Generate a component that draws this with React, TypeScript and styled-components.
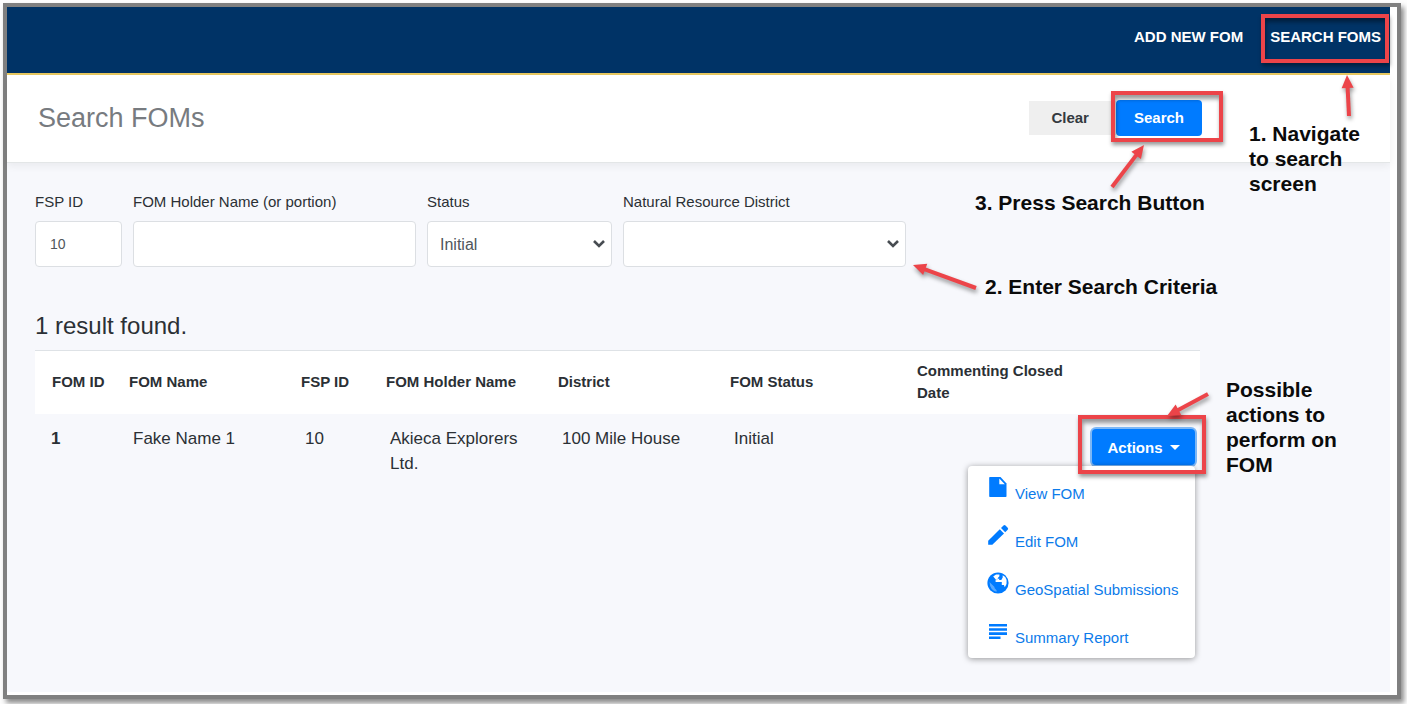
import React from "react";
import styled, { createGlobalStyle } from "styled-components";

const GlobalStyle = createGlobalStyle`
  *, *::before, *::after { box-sizing: border-box; }
  body {
    margin: 0;
    padding: 3px 6px 5px 3px;
    background: #fdfdfd;
    color: #2b3035;
    font-family: "Liberation Sans", Arial, sans-serif;
    font-size: 15px;
    line-height: 22px;
  }
`;

const RED = "#ec4449";
const BLUE = "#007bff";

const Frame = styled.div`
  position: relative;
  display: flex;
  flex-direction: column;
  min-height: calc(100vh - 8px);
  padding: 0 7px 3px 0;
  border: 4px solid #808080;
  background: #fff;
  box-shadow: 3px 4px 5px #8c8c8c;
`;

const Header = styled.header`
  display: flex;
  justify-content: flex-end;
  height: 68px;
  padding: 19px 9px 0 0;
  background: #003366;
  border-bottom: 2px solid #e8c961;
`;

const Nav = styled.nav`
  display: flex;
  align-items: flex-start;
  gap: 27px;
`;

const NavLink = styled.a`
  display: block;
  color: #fff;
  font-weight: bold;
  text-decoration: none;
  white-space: nowrap;
`;

const Marked = styled.div`
  position: relative;
`;

const Highlight = styled.span<{ $inset: string }>`
  position: absolute;
  z-index: 3;
  inset: ${(p) => p.$inset};
  border: 4px solid ${RED};
  box-shadow: 1px 3px 4px rgba(0, 0, 0, 0.4), inset 1px 4px 4px rgba(0, 0, 0, 0.4);
  pointer-events: none;
`;

const TitleBar = styled.section`
  position: relative;
  display: flex;
  align-items: center;
  justify-content: space-between;
  height: 88px;
  padding: 0 188px 2px 31px;
  background: #fff;
  border-bottom: 1px solid #e3e6e7;
  box-shadow: 0 3px 8px rgba(0, 0, 0, 0.06);
`;

const Title = styled.h1`
  margin: 0;
  color: #777b80;
  font-size: 27px;
  font-weight: normal;
  line-height: 36px;
`;

const ButtonRow = styled.div`
  display: flex;
  align-items: center;
`;

const Button = styled.button<{ $kind: "plain" | "primary"; $focused?: boolean }>`
  display: flex;
  align-items: center;
  justify-content: center;
  gap: 7px;
  height: ${(p) => (p.$kind === "plain" ? 34 : 36)}px;
  padding: 0 ${(p) => (p.$focused ? 14 : 18)}px;
  border: 0;
  border-radius: ${(p) => (p.$kind === "plain" ? 0 : 4)}px;
  background: ${(p) => (p.$kind === "plain" ? "#efefef" : BLUE)};
  color: ${(p) => (p.$kind === "plain" ? "#343a40" : "#fff")};
  box-shadow: ${(p) => (p.$focused ? "0 0 0 2px #7db7f5" : "none")};
  font: bold 15px "Liberation Sans", Arial, sans-serif;
  cursor: pointer;
`;

const ClearButton = styled(Button)`
  padding: 0 27px 0 22px;
`;

const Caret = styled.span`
  border: 5px solid transparent;
  border-top-color: #fff;
  border-bottom: 0;
`;

const Main = styled.main`
  flex: 1;
  padding: 28px 190px 40px 28px;
  background: #f7f8fc;
`;

const SearchForm = styled.form`
  display: grid;
  grid-template-columns: repeat(12, minmax(0, 1fr));
  column-gap: 11px;
`;

const Field = styled.div<{ $span: number }>`
  grid-column: span ${(p) => p.$span};
`;

const Label = styled.label`
  display: block;
  margin-bottom: 8px;
  white-space: nowrap;
`;

const controlStyle = `
  display: block;
  width: 100%;
  height: 46px;
  border: 1px solid #dcdfe3;
  border-radius: 4px;
  background: #fff;
  color: #50565c;
  font-family: "Liberation Sans", Arial, sans-serif;
`;

const TextInput = styled.input`
  ${controlStyle}
  padding: 0 14px;
  font-size: 14px;
`;

const SelectWrap = styled.div`
  position: relative;
`;

const Select = styled.select`
  ${controlStyle}
  appearance: none;
  padding: 0 30px 0 12px;
  font-size: 16px;
`;

const Chevron = styled.svg`
  position: absolute;
  top: 18px;
  right: 6px;
  pointer-events: none;
`;

const ResultCount = styled.h2`
  margin: 44px 0 9px;
  font-size: 24px;
  font-weight: normal;
  line-height: 30px;
`;

const Table = styled.table`
  width: 100%;
  table-layout: fixed;
  border-collapse: separate;
  border-spacing: 0;
`;

const HeadCell = styled.th`
  height: 64px;
  padding: 8px 12px 10px;
  border-top: 1px solid #dee2e6;
  background: #fff;
  text-align: left;
  vertical-align: middle;
  &:first-child { padding-left: 17px; padding-right: 0; }
`;

const cellStyle = `
  padding: 12px 12px 12px 16px;
  font-size: 17px;
  line-height: 25px;
  text-align: left;
  vertical-align: top;
`;

const Cell = styled.td`
  ${cellStyle}
`;

const RowHead = styled.th`
  ${cellStyle}
`;

const ActionCell = styled.td`
  padding: 15px 5px 0 15px;
  vertical-align: top;
`;

const ActionWrap = styled.div`
  position: relative;
  display: grid;
`;

const Menu = styled.ul`
  position: absolute;
  z-index: 2;
  top: 37px;
  right: 0;
  width: 227px;
  margin: 0;
  padding: 0;
  list-style: none;
  border-radius: 4px;
  background: #fff;
  box-shadow: 0 1px 6px rgba(0, 0, 0, 0.4);
`;

const MenuLink = styled.a`
  display: flex;
  gap: 6px;
  height: 48px;
  padding: 10px 0 0 19px;
  color: #0c7bea;
  text-decoration: none;
  white-space: nowrap;
`;

const MenuIcon = styled.svg`
  flex: none;
  width: 22px;
  height: 22px;
  fill: ${BLUE};
`;

const MenuText = styled.span`
  padding-top: 7px;
`;

const Note = styled.p<{ $top: number; $right: number; $width: number }>`
  position: absolute;
  z-index: 4;
  top: ${(p) => p.$top}px;
  right: ${(p) => p.$right}px;
  width: ${(p) => p.$width}px;
  margin: 0;
  color: #0b0b0b;
  font-size: 21px;
  font-weight: bold;
  line-height: 25px;
  white-space: pre-line;
`;

const ArrowLayer = styled.svg`
  position: absolute;
  z-index: 4;
  top: 0;
  right: 0;
  pointer-events: none;
  filter: drop-shadow(1px 3px 2px rgba(0, 0, 0, 0.4));
`;

type Point = [number, number];

function Arrow({ from, to }: { from: Point; to: Point }) {
  const dx = to[0] - from[0];
  const dy = to[1] - from[1];
  const length = Math.hypot(dx, dy);
  const angle = (Math.atan2(dy, dx) * 180) / Math.PI;
  return (
    <g transform={`translate(${from[0]} ${from[1]}) rotate(${angle})`}>
      <line x1="0" y1="0" x2={length - 9} y2="0" stroke={RED} strokeWidth="4" />
      <polygon points={`${length},0 ${length - 13},-6 ${length - 13},6`} fill={RED} />
    </g>
  );
}

function ChevronMark() {
  return (
    <Chevron width="14" height="10" viewBox="0 0 14 10" aria-hidden="true">
      <path d="M2 2l5 5 5-5" fill="none" stroke="#474c51" strokeWidth="2.6" />
    </Chevron>
  );
}

const columns = [
  { name: "FOM ID", width: 82 },
  { name: "FOM Name", width: 172 },
  { name: "FSP ID", width: 85 },
  { name: "FOM Holder Name", width: 172 },
  { name: "District", width: 172 },
  { name: "FOM Status", width: 187 },
  { name: "Commenting Closed Date", width: 172 },
  { name: "", width: 123 },
];

const menuItems = [
  {
    text: "View FOM",
    icon: (
      <>
        <path d="M3 1h10.500l6 6.500V20.200q0 .8-.8.800H3q-.8 0-.8-.800V1.800Q2.200 1 3 1z" />
        <path d="M12.300 2.600v5.600h5.500z" fill="#fff" />
      </>
    ),
  },
  {
    text: "Edit FOM",
    icon: (
      <>
        <path d="M1.200 20.800v-4L12.800 5.200l4.200 4.200L5.300 20.800z" />
        <path d="M14 4l2.500-2.500q1-.9 2 0l2.200 2.200q.9 1 0 2L18.200 8.200z" />
      </>
    ),
  },
  {
    text: "GeoSpatial Submissions",
    icon: (
      <>
        <circle cx="11" cy="11" r="10.600" />
        <path
          d="M6.200 4.600L9 2.600h3.400v1.600L10.800 6v1.700H8.600v2.200h6.200v3h2.100l.9 2.300q2.600-3.400 1.800-7.200-.8-3.400-3.900-4.700v2.100L14.300 8h-2.100V6.200L9.500 8.300z"
          fill="#fff"
        />
        <path d="M2.500 10l5 4.900v1.200l2.100 2.200v1.500Q3 18.300 2.500 10z" fill="#fff" opacity=".35" />
      </>
    ),
  },
  {
    text: "Summary Report",
    icon: <path d="M2 4h18v2.600H2zM2 8.200h18v2.600H2zM2 12.300h18v2.600H2zM2 16.400h11.500V19H2z" />,
  },
];

export default function App() {
  return (
    <>
      <GlobalStyle />
      <Frame>
        <Header>
          <Nav>
            <NavLink href="#add">ADD NEW FOM</NavLink>
            <Marked>
              <NavLink href="#search">SEARCH FOMS</NavLink>
              <Highlight $inset="-12px -8px -15px -9px" />
            </Marked>
          </Nav>
        </Header>

        <TitleBar>
          <Title>Search FOMs</Title>
          <ButtonRow>
            <ClearButton type="reset" form="fom-search" $kind="plain">Clear</ClearButton>
            <Marked>
              <Button type="submit" form="fom-search" $kind="primary">Search</Button>
              <Highlight $inset="-9px -21px -6px -5px" />
            </Marked>
          </ButtonRow>
        </TitleBar>

        <Main>
          <SearchForm id="fom-search" onSubmit={(e) => e.preventDefault()}>
            <Field $span={1}>
              <Label htmlFor="fsp">FSP ID</Label>
              <TextInput id="fsp" defaultValue="10" />
            </Field>
            <Field $span={3}>
              <Label htmlFor="holder">FOM Holder Name (or portion)</Label>
              <TextInput id="holder" />
            </Field>
            <Field $span={2}>
              <Label htmlFor="status">Status</Label>
              <SelectWrap>
                <Select id="status" defaultValue="Initial">
                  <option>Initial</option>
                </Select>
                <ChevronMark />
              </SelectWrap>
            </Field>
            <Field $span={3}>
              <Label htmlFor="district">Natural Resource District</Label>
              <SelectWrap>
                <Select id="district" defaultValue="">
                  <option value="" />
                </Select>
                <ChevronMark />
              </SelectWrap>
            </Field>
          </SearchForm>

          <ResultCount>1 result found.</ResultCount>

          <Table>
            <colgroup>
              {columns.map((c) => (
                <col key={c.name} width={c.width} />
              ))}
            </colgroup>
            <thead>
              <tr>
                {columns.map((c) => (
                  <HeadCell key={c.name} scope="col">{c.name}</HeadCell>
                ))}
              </tr>
            </thead>
            <tbody>
              <tr>
                <RowHead scope="row">1</RowHead>
                <Cell>Fake Name 1</Cell>
                <Cell>10</Cell>
                <Cell>Akieca Explorers Ltd.</Cell>
                <Cell>100 Mile House</Cell>
                <Cell>Initial</Cell>
                <Cell />
                <ActionCell>
                  <ActionWrap>
                    <Button type="button" $kind="primary" $focused aria-haspopup="true" aria-expanded="true">
                      Actions <Caret />
                    </Button>
                    <Menu>
                      {menuItems.map(({ text, icon }) => (
                        <li key={text}>
                          <MenuLink href="#fom">
                            <MenuIcon viewBox="0 0 22 22" aria-hidden="true">{icon}</MenuIcon>
                            <MenuText>{text}</MenuText>
                          </MenuLink>
                        </li>
                      ))}
                    </Menu>
                    <Highlight $inset="-14px -11px -9px -14px" />
                  </ActionWrap>
                </ActionCell>
              </tr>
            </tbody>
          </Table>
        </Main>

        <ArrowLayer width="500" height="500" viewBox="897 7 500 500" aria-hidden="true">
          <Arrow from={[1349, 116]} to={[1347, 75]} />
          <Arrow from={[1112, 187]} to={[1144, 145]} />
          <Arrow from={[976, 288]} to={[913, 265]} />
          <Arrow from={[1208, 394]} to={[1167, 416]} />
        </ArrowLayer>
        <Note $top={114} $right={18} $width={130}>{"1. Navigate\nto search\nscreen"}</Note>
        <Note $top={183} $right={172} $width={250}>3. Press Search Button</Note>
        <Note $top={267} $right={162} $width={250}>2. Enter Search Criteria</Note>
        <Note $top={370} $right={41} $width={130}>{"Possible\nactions to\nperform on\nFOM"}</Note>
      </Frame>
    </>
  );
}
